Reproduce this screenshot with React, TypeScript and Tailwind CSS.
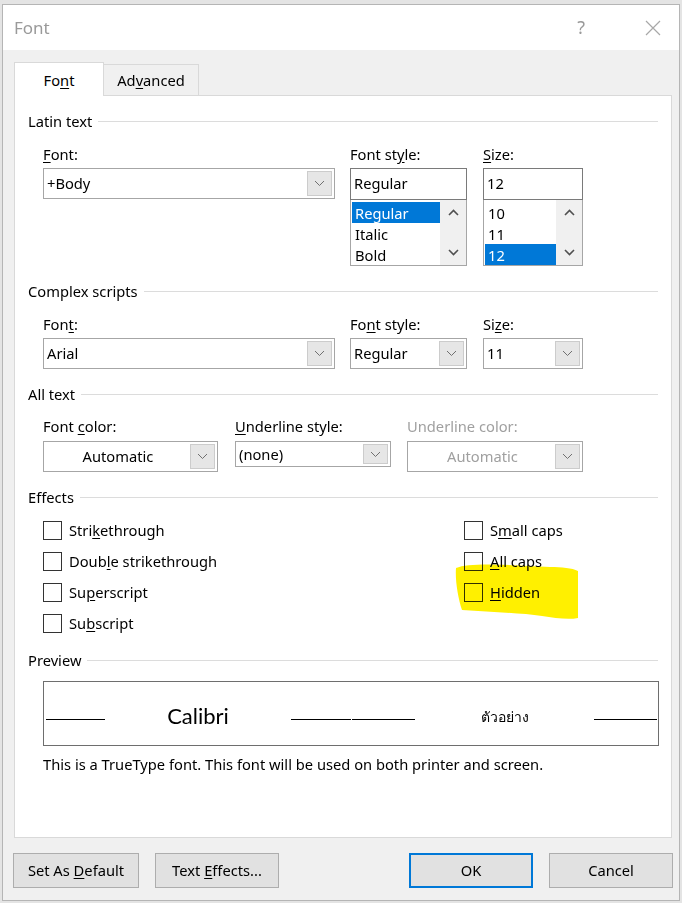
import React from 'react';

const Chev = ({ up = false, dark = false }: { up?: boolean; dark?: boolean }) => (
  <svg width="11" height="7" viewBox="0 0 11 7" className="block">
    <polyline
      points={up ? '1,6 5.5,1.5 10,6' : '1,1 5.5,5.5 10,1'}
      fill="none"
      stroke={dark ? '#505050' : '#707070'}
      strokeWidth={dark ? 1.6 : 1}
    />
  </svg>
);

const Section: React.FC<{ title: string; className?: string }> = ({ title, className }) => (
  <div className={`flex items-center h-[20px] gap-[6px] ${className || ''}`}>
    <span className="leading-none">{title}</span>
    <div className="flex-1 h-px bg-[#dcdcdc] mt-[1px]" />
  </div>
);

const Combo: React.FC<{
  w: string;
  h?: string;
  center?: boolean;
  disabled?: boolean;
  children: React.ReactNode;
}> = ({ w, h = 'h-[31px]', center, disabled, children }) => (
  <div className={`${w} ${h} flex border border-[#a6a6a6] bg-white p-[2px]`}>
    <div
      className={`flex-1 flex items-center ${center ? 'justify-center' : 'pl-[1px]'} ${
        disabled ? 'text-[#a0a0a0]' : 'text-black'
      }`}
    >
      {children}
    </div>
    <div className="w-[25px] flex items-center justify-center bg-[#e6e6e6] border border-[#cccccc]">
      <Chev />
    </div>
  </div>
);

const ListBox: React.FC<{ w: string; items: string[]; selected: number }> = ({ w, items, selected }) => (
  <div className={`${w} h-[66px] border border-[#a6a6a6] border-t-0 bg-white flex`}>
    <div className="flex-1 pt-[2px] pl-[1px]">
      {items.map((it, i) => (
        <div
          key={it}
          className={`h-[21px] flex items-center pl-[3px] pt-[2px] ${
            i === selected ? 'bg-[#0078d7] text-white' : 'text-black'
          }`}
        >
          {it}
        </div>
      ))}
    </div>
    <div className="w-[26px] bg-[#f0f0f0] flex flex-col items-center justify-between py-[9px]">
      <Chev up dark />
      <Chev dark />
    </div>
  </div>
);

const Check: React.FC<{ children: React.ReactNode }> = ({ children }) => (
  <div className="flex items-center h-[19px] gap-[7px]">
    <div className="w-[19px] h-[19px] border border-[#333333] bg-white" />
    <span className="leading-none">{children}</span>
  </div>
);

const Btn: React.FC<{ w: string; primary?: boolean; children: React.ReactNode }> = ({ w, primary, children }) => (
  <div
    className={`${w} h-[35px] flex items-center justify-center bg-[#e1e1e1] ${
      primary ? 'border-2 border-[#0078d7]' : 'border border-[#adadad]'
    }`}
  >
    {children}
  </div>
);

const Seg: React.FC<{ w: string; className?: string }> = ({ w, className }) => (
  <div className={`${w} h-px bg-black self-end mb-[25px] ${className || ''}`} />
);

export default function App() {
  return (
    <div className="relative w-[682px] h-[903px] bg-[#e4e4e4] pt-[4px] pl-[2px] text-[14.7px] text-black font-['Noto_Sans','Open_Sans',sans-serif]">
      <div className="w-[678px] h-[897px] border border-[#b5b5b5] bg-[#f0f0f0] flex flex-col">
        {/* title bar */}
        <div className="h-[45px] bg-white flex items-center pl-[11px] pr-[18px]">
          <span className="text-[17px] text-[#9a9a9a]">Font</span>
          <span className="ml-auto text-[18px] text-[#9a9a9a] mr-[60px]">?</span>
          <svg width="16" height="16" viewBox="0 0 16 16">
            <path d="M1 1 L15 15 M15 1 L1 15" stroke="#a8a8a8" strokeWidth="1.2" />
          </svg>
        </div>

        <div className="pl-[11px] pr-[7px] pt-[12px]">
          {/* tabs */}
          <div className="flex items-end h-[33px]">
            <div className="w-[90px] h-[34px] bg-white border border-b-0 border-[#d9d9d9] flex items-center justify-center pt-[2px] relative z-10 -mb-px">
              <span>
                Fo<u className="underline-offset-2">n</u>t
              </span>
            </div>
            <div className="w-[95px] h-[31px] border border-l-0 border-b-0 border-[#d9d9d9] flex items-center justify-center">
              <span>
                Ad<u className="underline-offset-2">v</u>anced
              </span>
            </div>
          </div>

          {/* panel */}
          <div className="w-[658px] h-[743px] bg-white border border-[#d9d9d9] pl-[13px] pr-[13px]">
            {/* Latin text */}
            <Section title="Latin text" className="mt-[15px]" />
            <div className="flex pl-[15px] mt-[13px]">
              <div className="w-[292px]">
                <div className="h-[20px] flex items-center">
                  <span>
                    <u className="underline-offset-2">F</u>ont:
                  </span>
                </div>
                <div className="mt-[4px]">
                  <Combo w="w-[292px]">+Body</Combo>
                </div>
              </div>
              <div className="w-[117px] ml-[15px]">
                <div className="h-[20px] flex items-center">
                  <span>
                    Font st<u className="underline-offset-2">y</u>le:
                  </span>
                </div>
                <div className="mt-[4px] h-[32px] border border-[#7a7a7a] flex items-center pl-[3px] pb-[2px]">Regular</div>
                <ListBox w="w-[117px]" items={['Regular', 'Italic', 'Bold']} selected={0} />
              </div>
              <div className="w-[100px] ml-[16px]">
                <div className="h-[20px] flex items-center">
                  <span>
                    <u className="underline-offset-2">S</u>ize:
                  </span>
                </div>
                <div className="mt-[4px] h-[32px] border border-[#7a7a7a] flex items-center pl-[3px] pb-[2px]">12</div>
                <ListBox w="w-[100px]" items={['10', '11', '12']} selected={2} />
              </div>
            </div>

            {/* Complex scripts */}
            <Section title="Complex scripts" className="mt-[15px]" />
            <div className="flex pl-[15px] mt-[13px]">
              <div className="w-[292px]">
                <div className="h-[20px] flex items-center">
                  <span>
                    Fon<u className="underline-offset-2">t</u>:
                  </span>
                </div>
                <div className="mt-[4px]">
                  <Combo w="w-[292px]">Arial</Combo>
                </div>
              </div>
              <div className="w-[117px] ml-[15px]">
                <div className="h-[20px] flex items-center">
                  <span>
                    Fo<u className="underline-offset-2">n</u>t style:
                  </span>
                </div>
                <div className="mt-[4px]">
                  <Combo w="w-[117px]">Regular</Combo>
                </div>
              </div>
              <div className="w-[100px] ml-[16px]">
                <div className="h-[20px] flex items-center">
                  <span>
                    Si<u className="underline-offset-2">z</u>e:
                  </span>
                </div>
                <div className="mt-[4px]">
                  <Combo w="w-[100px]">11</Combo>
                </div>
              </div>
            </div>

            {/* All text */}
            <Section title="All text" className="mt-[15px]" />
            <div className="flex pl-[15px] mt-[12px]">
              <div className="w-[175px]">
                <div className="h-[20px] flex items-center">
                  <span>
                    Font <u className="underline-offset-2">c</u>olor:
                  </span>
                </div>
                <div className="mt-[5px]">
                  <Combo w="w-[175px]" center>
                    Automatic
                  </Combo>
                </div>
              </div>
              <div className="w-[156px] ml-[17px]">
                <div className="h-[20px] flex items-center">
                  <span>
                    <u className="underline-offset-2">U</u>nderline style:
                  </span>
                </div>
                <div className="mt-[5px]">
                  <Combo w="w-[156px]" h="h-[26px]">
                    (none)
                  </Combo>
                </div>
              </div>
              <div className="w-[176px] ml-[16px]">
                <div className="h-[20px] flex items-center text-[#a0a0a0]">Underline color:</div>
                <div className="mt-[5px]">
                  <Combo w="w-[176px]" center disabled>
                    Automatic
                  </Combo>
                </div>
              </div>
            </div>

            {/* Effects */}
            <Section title="Effects" className="mt-[15px]" />
            <div className="flex pl-[15px] mt-[14px]">
              <div className="w-[421px] flex flex-col gap-[12px]">
                <Check>
                  Stri<u className="underline-offset-2">k</u>ethrough
                </Check>
                <Check>
                  Doub<u className="underline-offset-2">l</u>e strikethrough
                </Check>
                <Check>
                  Su<u className="underline-offset-2">p</u>erscript
                </Check>
                <Check>
                  Su<u className="underline-offset-2">b</u>script
                </Check>
              </div>
              <div className="flex flex-col gap-[12px]">
                <Check>
                  S<u className="underline-offset-2">m</u>all caps
                </Check>
                <Check>
                  <u className="underline-offset-2">A</u>ll caps
                </Check>
                <Check>
                  <u className="underline-offset-2">H</u>idden
                </Check>
              </div>
            </div>

            {/* Preview */}
            <Section title="Preview" className="mt-[17px]" />
            <div className="ml-[15px] mt-[11px] w-[616px] h-[65px] border border-[#6e6e6e] flex">
              <Seg w="w-[59px]" className="ml-[2px]" />
              <div className="w-[186px] flex items-center justify-center pt-[3px]">
                <span className="text-[22px] font-['Lato','Noto_Sans',sans-serif]">Calibri</span>
              </div>
              <Seg w="w-[60px]" />
              <Seg w="w-[63px]" className="ml-[1px]" />
              <div className="w-[179px] flex items-center justify-center pt-[5px]">
                <span className="text-[14px]">ตัวอย่าง</span>
              </div>
              <Seg w="w-[63px]" />
            </div>
            <div className="ml-[15px] mt-[8px] h-[20px] flex items-center">
              This is a TrueType font. This font will be used on both printer and screen.
            </div>
          </div>

          {/* buttons */}
          <div className="flex mt-[15px] -ml-[1px] -mr-[1px]">
            <Btn w="w-[126px]">
              <span>
                Set As <u className="underline-offset-2">D</u>efault
              </span>
            </Btn>
            <div className="ml-[16px]">
              <Btn w="w-[124px]">
                <span>
                  Text <u className="underline-offset-2">E</u>ffects...
                </span>
              </Btn>
            </div>
            <div className="ml-auto">
              <Btn w="w-[124px]" primary>
                OK
              </Btn>
            </div>
            <div className="ml-[16px]">
              <Btn w="w-[124px]">Cancel</Btn>
            </div>
          </div>
        </div>
      </div>

      {/* highlighter mark */}
      <svg
        className="absolute left-[450px] top-[558px] mix-blend-multiply pointer-events-none"
        width="135"
        height="66"
        viewBox="0 0 135 66"
      >
        <path
          d="M6 10 C 20 4, 60 7, 100 9 C 112 9, 122 10, 128 13 L 128 60 C 118 62, 105 60, 92 58 C 70 55, 40 54, 12 52 C 8 40, 5 22, 6 10 Z"
          fill="#fff000"
        />
      </svg>
    </div>
  );
}
